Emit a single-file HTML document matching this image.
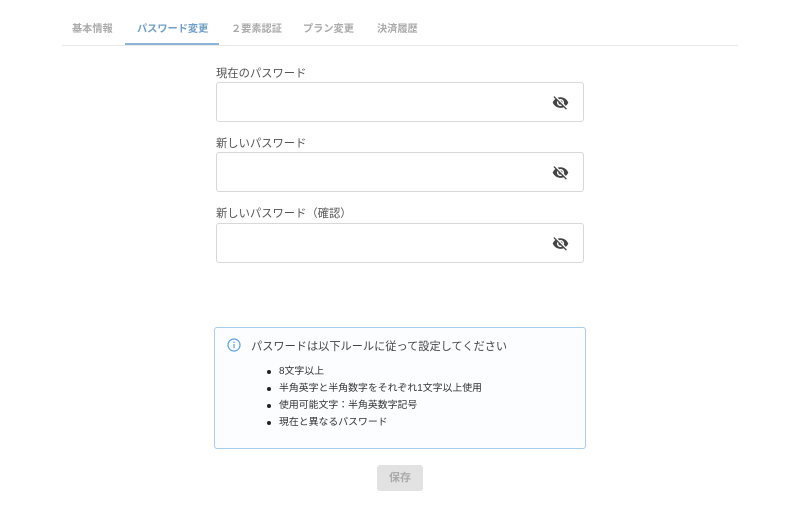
<!DOCTYPE html>
<html><head><meta charset="utf-8"><style>
*{box-sizing:border-box;margin:0;padding:0}
body{width:800px;height:522px;background:#fff;font-family:"Liberation Sans","Noto Sans CJK JP",sans-serif;color:#555;position:relative;overflow:hidden}
.tabs{position:absolute;left:62px;top:0;width:676px;height:46px;border-bottom:1px solid #e8e8e8}
.tab{position:absolute;top:20px;font-size:10.2px;color:#aaa;font-weight:bold}
.act{color:#6f9fc7}
.ul{position:absolute;left:63px;top:43px;width:94px;height:2px;background:#8db3d6}
.lbl{position:absolute;left:216px;font-size:11.3px;color:#555}
.inp{position:absolute;left:216px;width:368px;height:40px;border:1px solid #d8d8d8;border-radius:3px}
.inp svg{position:absolute;left:335px;top:11px}
.info{position:absolute;left:214px;top:327px;width:372px;height:122px;border:1px solid #a9cdee;border-radius:3px;background:#fbfdfe}
.info .t{position:absolute;left:36px;top:10px;font-size:11.2px;color:#444}
.info ul{position:absolute;left:64px;top:35px;font-size:9.9px;color:#333;list-style:none}
.info li{height:17px;line-height:17px;position:relative}
.info li:before{content:"";position:absolute;left:-12px;top:7px;width:4px;height:4px;border-radius:50%;background:#222}
.btn{position:absolute;left:377px;top:465px;width:46px;height:26px;background:#e2e2e2;border-radius:3px;color:#aaa;font-size:11px;font-weight:bold;text-align:center;line-height:26px}
</style></head><body>
<div class="tabs">
<span class="tab" style="left:10px">基本情報</span>
<span class="tab act" style="left:75px">パスワード変更</span>
<span class="tab" style="left:169px">２要素認証</span>
<span class="tab" style="left:241px">プラン変更</span>
<span class="tab" style="left:315px">決済履歴</span>
<div class="ul"></div>
</div>
<div class="lbl" style="top:65px">現在のパスワード</div>
<div class="inp" style="top:82px"><svg width="17" height="17" viewBox="0 0 24 24"><path fill="#444" d="M12 7c2.76 0 5 2.24 5 5 0 .65-.13 1.26-.36 1.83l2.92 2.92c1.51-1.26 2.7-2.89 3.43-4.75-1.73-4.39-6-7.5-11-7.5-1.4 0-2.74.25-3.98.7l2.16 2.16C10.74 7.13 11.35 7 12 7zM2 4.27l2.28 2.28.46.46C3.08 8.3 1.78 10.02 1 12c1.73 4.39 6 7.5 11 7.5 1.55 0 3.03-.3 4.38-.84l.42.42L19.73 22 21 20.73 3.27 3 2 4.27zM7.53 9.8l1.55 1.55c-.05.21-.08.43-.08.65 0 1.66 1.34 3 3 3 .22 0 .44-.03.65-.08l1.55 1.55c-.67.33-1.41.53-2.2.53-2.76 0-5-2.24-5-5 0-.79.2-1.53.53-2.2zm4.31-.78l3.15 3.15.02-.16c0-1.66-1.34-3-3-3l-.17.01z"/></svg></div>
<div class="lbl" style="top:135px">新しいパスワード</div>
<div class="inp" style="top:152px"><svg width="17" height="17" viewBox="0 0 24 24"><path fill="#444" d="M12 7c2.76 0 5 2.24 5 5 0 .65-.13 1.26-.36 1.83l2.92 2.92c1.51-1.26 2.7-2.89 3.43-4.75-1.73-4.39-6-7.5-11-7.5-1.4 0-2.74.25-3.98.7l2.16 2.16C10.74 7.13 11.35 7 12 7zM2 4.27l2.28 2.28.46.46C3.08 8.3 1.78 10.02 1 12c1.73 4.39 6 7.5 11 7.5 1.55 0 3.03-.3 4.38-.84l.42.42L19.73 22 21 20.73 3.27 3 2 4.27zM7.53 9.8l1.55 1.55c-.05.21-.08.43-.08.65 0 1.66 1.34 3 3 3 .22 0 .44-.03.65-.08l1.55 1.55c-.67.33-1.41.53-2.2.53-2.76 0-5-2.24-5-5 0-.79.2-1.53.53-2.2zm4.31-.78l3.15 3.15.02-.16c0-1.66-1.34-3-3-3l-.17.01z"/></svg></div>
<div class="lbl" style="top:205px">新しいパスワード（確認）</div>
<div class="inp" style="top:223px"><svg width="17" height="17" viewBox="0 0 24 24"><path fill="#444" d="M12 7c2.76 0 5 2.24 5 5 0 .65-.13 1.26-.36 1.83l2.92 2.92c1.51-1.26 2.7-2.89 3.43-4.75-1.73-4.39-6-7.5-11-7.5-1.4 0-2.74.25-3.98.7l2.16 2.16C10.74 7.13 11.35 7 12 7zM2 4.27l2.28 2.28.46.46C3.08 8.3 1.78 10.02 1 12c1.73 4.39 6 7.5 11 7.5 1.55 0 3.03-.3 4.38-.84l.42.42L19.73 22 21 20.73 3.27 3 2 4.27zM7.53 9.8l1.55 1.55c-.05.21-.08.43-.08.65 0 1.66 1.34 3 3 3 .22 0 .44-.03.65-.08l1.55 1.55c-.67.33-1.41.53-2.2.53-2.76 0-5-2.24-5-5 0-.79.2-1.53.53-2.2zm4.31-.78l3.15 3.15.02-.16c0-1.66-1.34-3-3-3l-.17.01z"/></svg></div>
<div class="info">
<svg style="position:absolute;left:12px;top:10px" width="14" height="14" viewBox="0 0 14 14"><circle cx="7" cy="7" r="6" fill="none" stroke="#5aa0e0" stroke-width="1.2"/><rect x="6.4" y="6" width="1.2" height="4.2" fill="#5aa0e0"/><circle cx="7" cy="4.2" r=".75" fill="#5aa0e0"/></svg>
<div class="t">パスワードは以下ルールに従って設定してください</div>
<ul><li>8文字以上</li><li>半角英字と半角数字をそれぞれ1文字以上使用</li><li>使用可能文字：半角英数字記号</li><li>現在と異なるパスワード</li></ul>
</div>
<div class="btn">保存</div>
</body></html>
